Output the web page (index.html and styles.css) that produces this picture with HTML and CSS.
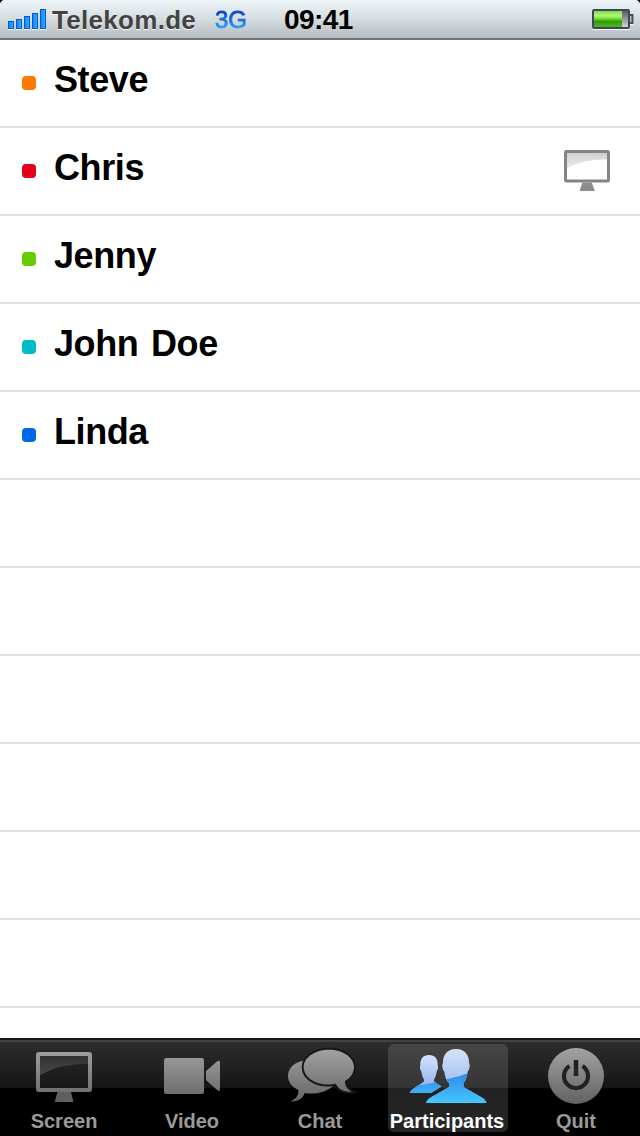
FILE: index.html
```html
<!DOCTYPE html>
<html lang="en">
<head>
	<meta charset="UTF-8">
	<title>Participants</title>
	<link rel="stylesheet" href="styles.css">
</head>
<body>
	<div class="screen">
		<div class="status">
			<svg class="signal" width="40" height="22" viewBox="0 0 40 22">
				<defs>
					<linearGradient id="bar" x1="0" y1="0" x2="1" y2="0">
						<stop offset="0" stop-color="#1685f5"/>
						<stop offset="1" stop-color="#27b0ff"/>
					</linearGradient>
				</defs>
				<g fill="url(#bar)" stroke="#0857d2" stroke-width="1">
					<rect x="0.5" y="13.5" width="5" height="7"/>
					<rect x="8.5" y="11.5" width="5" height="9"/>
					<rect x="16.5" y="8.5" width="5" height="12"/>
					<rect x="24.5" y="5.5" width="5" height="15"/>
					<rect x="32.5" y="1.5" width="5" height="19"/>
				</g>
			</svg>
			<span class="carrier">Telekom.de</span>
			<span class="network">3G</span>
			<span class="clock">09:41</span>
			<svg class="battery" width="42" height="22" viewBox="0 0 42 22">
				<defs>
					<linearGradient id="charge" x1="0" y1="0" x2="0" y2="1">
						<stop offset="0" stop-color="#7fdc43"/>
						<stop offset="0.3" stop-color="#b2fa7c"/>
						<stop offset="0.5" stop-color="#6fd62d"/>
						<stop offset="0.65" stop-color="#2f9a08"/>
						<stop offset="1" stop-color="#4fb822"/>
					</linearGradient>
					<linearGradient id="empty" x1="0" y1="0" x2="0" y2="1">
						<stop offset="0" stop-color="#55565c"/>
						<stop offset="1" stop-color="#d8d8dc"/>
					</linearGradient>
				</defs>
				<rect x="1" y="2" width="36" height="18" rx="1" fill="url(#empty)" stroke="#41455a" stroke-width="2"/>
				<rect x="2" y="3" width="28" height="16" fill="url(#charge)"/>
				<path d="M38 7h2.5v8H38" fill="#b9bec4" stroke="#4a4e60" stroke-width="2"/>
			</svg>
		</div>

		<ul class="list">
			<li><i class="dot orange"></i><span class="name">Steve</span></li>
			<li>
				<i class="dot red"></i><span class="name">Chris</span>
				<svg class="presenter" width="46" height="42" viewBox="0 0 46 42">
					<defs>
						<linearGradient id="glare" x1="0" y1="0" x2="0" y2="1">
							<stop offset="0" stop-color="#d0d0d0"/>
							<stop offset="1" stop-color="#ededed"/>
						</linearGradient>
					</defs>
					<rect x="1.5" y="1.5" width="43" height="29.5" rx="1" fill="#fff"/>
					<path d="M3 3h40v6.5Q19 9 3 18.5z" fill="url(#glare)"/>
					<rect x="1.5" y="1.5" width="43" height="29.5" rx="1" fill="none" stroke="#848484" stroke-width="3"/>
					<path d="M18.3 32.5h9.5l3 8.500H15.500z" fill="#8c8c8c"/>
				</svg>
			</li>
			<li><i class="dot green"></i><span class="name">Jenny</span></li>
			<li><i class="dot teal"></i><span class="name">John Doe</span></li>
			<li><i class="dot blue"></i><span class="name">Linda</span></li>
			<li></li>
			<li></li>
			<li></li>
			<li></li>
			<li></li>
			<li></li>
		</ul>

		<div class="tabs">
			<div class="tab">
				<svg width="128" height="68" viewBox="0 0 128 68">
					<defs>
						<linearGradient id="metal" gradientUnits="userSpaceOnUse" x1="0" y1="10" x2="0" y2="66">
							<stop offset="0" stop-color="#a3a3a3"/>
							<stop offset="1" stop-color="#626262"/>
						</linearGradient>
						<linearGradient id="shine" x1="0" y1="0" x2="0" y2="1">
							<stop offset="0" stop-color="#333"/>
							<stop offset="1" stop-color="#484848"/>
						</linearGradient>
						<linearGradient id="panel" x1="0" y1="0" x2="0" y2="1">
							<stop offset="0" stop-color="#292929"/>
							<stop offset="1" stop-color="#151515"/>
						</linearGradient>
					</defs>
					<rect x="38" y="16" width="52" height="36" fill="url(#panel)"/>
					<path d="M40 18h48v7.5Q59 26 40 37z" fill="url(#shine)"/>
					<rect x="38" y="16" width="52" height="36" rx="1" fill="none" stroke="url(#metal)" stroke-width="4"/>
					<path d="M57.5 54h13.5l2.5 10H54.7z" fill="#5f5f5f"/>
				</svg>
				<span class="label">Screen</span>
			</div>
			<div class="tab">
				<svg width="128" height="68" viewBox="0 0 128 68">
					<rect x="36" y="20" width="40" height="36" rx="2.5" fill="url(#metal)"/>
					<path d="M78 33L89 23.5Q92 21.5 92 25V51Q92 54.5 89 52L78 42z" fill="url(#metal)"/>
				</svg>
				<span class="label">Video</span>
			</div>
			<div class="tab">
				<svg width="128" height="68" viewBox="0 0 128 68">
					<path d="M50 22C38 24 32 30 32 38C32 44 36 49 42.3 52C43 57 40 61 34.5 63.5C42 64 47.5 60 48.5 55C60 57 72 54 79 46z" fill="url(#metal)"/>
					<path d="M73 11.7C87 11.7 98 19.5 98 29C98 35 94.5 40 89 43C89 48 91 51 95.5 53.5C88 54.5 82 51 80 45.8C62 49 47.7 40.5 47.7 29C47.7 19.500 59 11.700 73 11.700z" fill="url(#metal)" stroke="#171717" stroke-width="4" paint-order="stroke"/>
				</svg>
				<span class="label">Chat</span>
			</div>
			<div class="tab active">
				<svg width="128" height="68" viewBox="0 0 128 68">
					<defs>
						<linearGradient id="pale" x1="0" y1="0" x2="0" y2="1">
							<stop offset="0" stop-color="#d5e2fa"/>
							<stop offset="1" stop-color="#86abed"/>
						</linearGradient>
						<linearGradient id="azure" gradientUnits="userSpaceOnUse" x1="0" y1="34" x2="0" y2="65">
							<stop offset="0" stop-color="#3385e6"/>
							<stop offset="1" stop-color="#42c8ff"/>
						</linearGradient>
						<clipPath id="front">
							<path d="M72 11C80.500 11 85.500 17 85 25C86.500 27 85.500 32 83.700 33.500C83 39 81.500 43 79.500 45V49L97 59Q101.500 61.500 102.500 65H42Q43 61.500 47.500 59L65 49V45C62.500 43 61 39 60.300 33.500C58.500 32 57.500 27 59 25C58.500 17 63.500 11 72 11z"/>
						</clipPath>
						<clipPath id="back">
							<path d="M45 17C51 17 54 21 53.700 27C54.500 29 54 32 52.800 33C52 37 51.500 39.500 50 41.500V43.500L57.500 48.500C53.500 51 50 53 47 55H25.700Q26.500 52.500 29 51L40 43.500V41.500C38.500 39.500 38 37 37.200 33C36 32 35.500 29 36.300 27C36 21 39 17 45 17z"/>
						</clipPath>
					</defs>
					<g clip-path="url(#back)">
						<rect x="24" y="17" width="36" height="38" fill="url(#pale)"/>
						<path d="M24 48Q40 48 60 42V56H24z" fill="url(#azure)"/>
					</g>
					<g clip-path="url(#front)">
						<rect x="40" y="11" width="64" height="54" fill="url(#pale)"/>
						<path d="M40 43Q65 43 86 34.500L104 30V66H40z" fill="url(#azure)"/>
					</g>
				</svg>
				<span class="label">Participants</span>
			</div>
			<div class="tab">
				<svg width="128" height="68" viewBox="0 0 128 68">
					<circle cx="64" cy="38" r="28" fill="url(#metal)"/>
					<path d="M57.500 28A12 12 0 1 0 70.500 28" fill="none" stroke="#222" stroke-width="4.200"/>
					<path d="M64 22v16" stroke="#222" stroke-width="4.500"/>
				</svg>
				<span class="label">Quit</span>
			</div>
		</div>
	</div>
</body>
</html>
```

FILE: styles.css
```css
*{padding: 0;margin: 0;box-sizing: border-box;}
body{
	background: #000;
	font-family: "Liberation Sans", Arial, sans-serif;
	font-weight: bold;
}
.screen{
	width: 640px;
	height: 1136px;
	display: flex;
	flex-direction: column;
	overflow: hidden;
	background: #fff;
}

/* status bar */
.status{
	height: 40px;
	flex: none;
	display: flex;
	padding: 0 6px 0 8px;
	line-height: 40px;
	background: linear-gradient(#eef6f9, #dbe2e5 40%, #b7bdc0);
	border-bottom: 2px solid #6c7476;
	border-radius: 5px 5px 0 0;
	box-shadow: 0 -6px 0 6px #000;
	clip-path: inset(0);
	white-space: nowrap;
}
.signal{
	margin-top: 8px;
	filter: drop-shadow(0 1px 0 #fff);
}
.carrier{
	width: 163px;
	padding-left: 4px;
	font-size: 26px;
	letter-spacing: 0.3px;
	color: #434343;
	text-shadow: 0 1px 0 #fff;
}
.network{
	width: 73px;
	margin-left: 4px;
	font-size: 24px;
	font-weight: normal;
	color: transparent;
	background: linear-gradient(#0440cc 30%, #279bf5 72%);
	-webkit-background-clip: text;
	background-clip: text;
	-webkit-text-stroke: 0.8px transparent;
}
.clock{
	font-size: 28px;
	letter-spacing: -0.6px;
	margin-left: -4px;
	color: #000;
}
.battery{
	margin: 8px 0 0 auto;
	filter: drop-shadow(0 1px 0 #f5f8f9);
}

/* participants */
.list{
	flex: 1;
	list-style: none;
	overflow: hidden;
}
.list li{
	height: 88px;
	display: flex;
	padding: 0 30px 0 22px;
	border-bottom: 2px solid #e0e0e0;
}
.dot{
	width: 14px;
	height: 14px;
	margin-top: 36px;
	border-radius: 4px;
}
.orange{background: #ff7800;}
.red{background: #e2001a;}
.green{background: #66cc00;}
.teal{background: #00bdc4;}
.blue{background: #0069e6;}
.name{
	margin-left: 18px;
	font-size: 36px;
	line-height: 79px;
	letter-spacing: -0.4px;
	word-spacing: 3px;
	color: #000;
}
.presenter{
	margin: 22px 0 0 auto;
}

/* tab bar */
.tabs{
	height: 98px;
	flex: none;
	display: flex;
	border-top: 2px solid #161616;
	background: linear-gradient(#424242 0, #424242 2px, #2d2d2d 2px, #151515 48px, #000 48px);
}
.tab{
	width: 128px;
	display: flex;
	flex-direction: column;
	align-items: center;
	color: #9a9a9a;
}
.tab svg{
	margin-top: -2px;
	flex: none;
}
.label{
	font-size: 20px;
	line-height: 30px;
}
.active{
	color: #fff;
	background: linear-gradient(#464646, #343434 44px, #222 44px, #262626) 4px 4px / 120px 88px no-repeat;
	clip-path: inset(4px 4px 4px 4px round 6px);
}
.active .label{
	margin-left: -2px;
}
```
